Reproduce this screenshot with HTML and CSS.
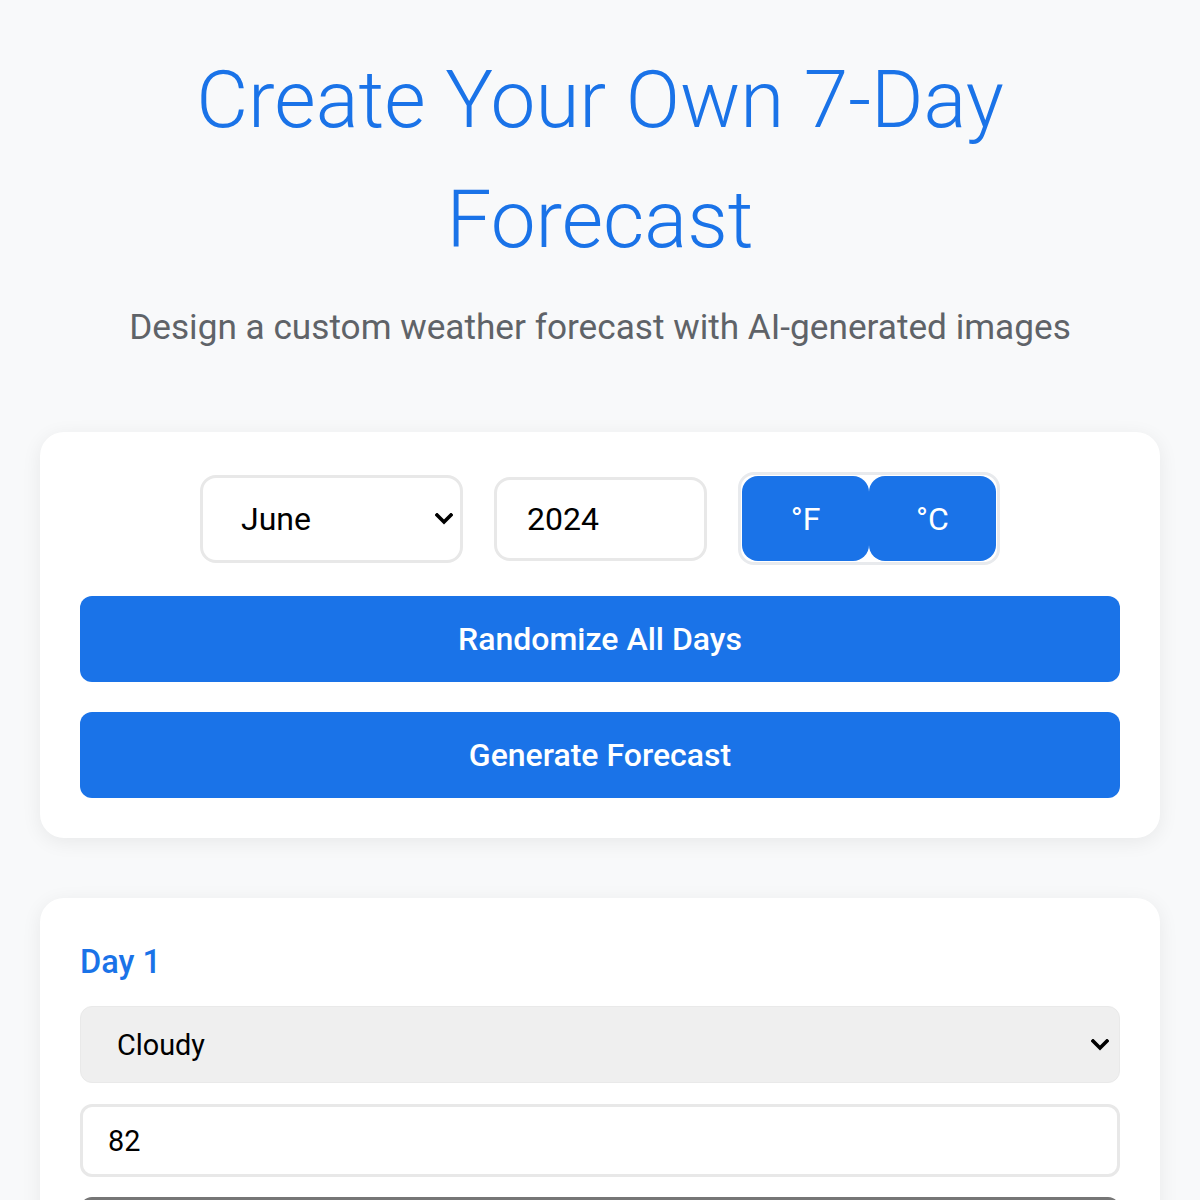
FILE: index.html
```html
<!DOCTYPE html>
<html lang="en">
<head>
<meta charset="utf-8">
<title>Create Your Own 7-Day Forecast</title>
<link rel="stylesheet" href="styles.css">
</head>
<body>
<div class="page">
  <header class="hero">
    <h1 class="title">Create Your Own 7-Day Forecast</h1>
    <p class="subtitle">Design a custom weather forecast with AI-generated images</p>
  </header>

  <section class="card controls">
    <div class="control-row">
      <div class="select-wrap month">
        <select class="field select">
          <option>January</option><option>February</option><option>March</option>
          <option>April</option><option>May</option><option selected>June</option>
          <option>July</option><option>August</option><option>September</option>
          <option>October</option><option>November</option><option>December</option>
        </select>
        <svg class="chevron" viewBox="0 0 18 12" aria-hidden="true"><path d="M2 2 L9 9 L16 2" fill="none" stroke="#000" stroke-width="3.6" stroke-linecap="square"/></svg>
      </div>
      <input class="field year" type="text" value="2024">
      <div class="unit-toggle">
        <button class="unit-btn">°F</button>
        <button class="unit-btn">°C</button>
      </div>
    </div>
    <button class="primary-btn">Randomize All Days</button>
    <button class="primary-btn">Generate Forecast</button>
  </section>

  <section class="card day">
    <h2 class="day-title">Day 1</h2>
    <div class="select-wrap full">
      <select class="field select gray">
        <option>Sunny</option><option selected>Cloudy</option><option>Rainy</option>
        <option>Stormy</option><option>Snowy</option><option>Windy</option>
      </select>
      <svg class="chevron" viewBox="0 0 18 12" aria-hidden="true"><path d="M2 2 L9 9 L16 2" fill="none" stroke="#000" stroke-width="3.6" stroke-linecap="square"/></svg>
    </div>
    <input class="field temp" type="text" value="82">
    <textarea class="field notes" rows="3"></textarea>
  </section>
</div>
</body>
</html>
```

FILE: styles.css
```css
* { box-sizing: border-box; }

html, body {
  margin: 0;
  padding: 0;
  background: #f8f9fa;
  font-family: Roboto, "Liberation Sans", Arial, sans-serif;
}

.page {
  padding: 40px 40px 40px;
}

.hero {
  text-align: center;
}

.title {
  margin: 0;
  font-size: 80px;
  line-height: 120px;
  font-weight: 300;
  color: #1a73e8;
}

.subtitle {
  margin: 21px 0 0;
  font-size: 35.2px;
  line-height: 52px;
  font-weight: 400;
  color: #5f6368;
}

.card {
  background: #ffffff;
  border-radius: 24px;
  box-shadow: 0 4px 20px rgba(0, 0, 0, 0.07);
  padding: 40px;
}

.controls {
  margin-top: 79px;
  display: flex;
  flex-direction: column;
  gap: 30px;
}

.control-row {
  display: flex;
  justify-content: center;
  align-items: center;
  gap: 31px;
  margin-bottom: 1px;
}

.field {
  font-family: Roboto, "Liberation Sans", Arial, sans-serif;
  font-size: 32px;
  color: #000;
  background: #fff;
  border: 3px solid #e8e8e8;
  border-radius: 16px;
  outline: none;
}

.select-wrap {
  position: relative;
}

.select {
  -webkit-appearance: none;
  appearance: none;
  width: 100%;
  height: 100%;
  cursor: pointer;
}

.chevron {
  position: absolute;
  top: 50%;
  width: 18px;
  height: 12px;
  margin-top: -6px;
  pointer-events: none;
}

.month {
  width: 263px;
  height: 88px;
}

.month .select {
  padding: 0 0 0 38px;
}

.month .chevron {
  right: 10px;
}

.year {
  width: 213px;
  height: 84px;
  padding: 0 0 0 30px;
}

.unit-toggle {
  display: flex;
  border: 3px solid #e8eaed;
  border-radius: 16px;
  padding: 1px;
  background: #fff;
}

.unit-btn {
  width: 127px;
  height: 85px;
  border: none;
  border-radius: 16px;
  background: #1a73e8;
  color: #fff;
  font-family: Roboto, "Liberation Sans", Arial, sans-serif;
  font-size: 32px;
  font-weight: 400;
  cursor: pointer;
}

.primary-btn {
  width: 100%;
  height: 86px;
  border: none;
  border-radius: 12px;
  background: #1a73e8;
  color: #fff;
  font-family: Roboto, "Liberation Sans", Arial, sans-serif;
  font-size: 32px;
  font-weight: 500;
  cursor: pointer;
}

.day {
  margin-top: 60px;
  padding-top: 44px;
  display: flex;
  flex-direction: column;
}

.day-title {
  margin: 0 0 24px;
  font-size: 32.5px;
  line-height: 40px;
  font-weight: 500;
  color: #1a73e8;
}

.full {
  height: 77px;
}

.gray {
  font-size: 28.8px;
  background: #efefef;
  border: 1px solid #e9e9e9;
  border-radius: 12px;
  padding: 0 0 0 36px;
}

.full .chevron {
  right: 11px;
}

.temp {
  margin-top: 21px;
  height: 73px;
  font-size: 28.8px;
  border-radius: 12px;
  padding: 0 0 0 25px;
}

.notes {
  margin-top: 20px;
  height: 160px;
  border: 3px solid #767676;
  border-radius: 12px;
  resize: none;
}
```
